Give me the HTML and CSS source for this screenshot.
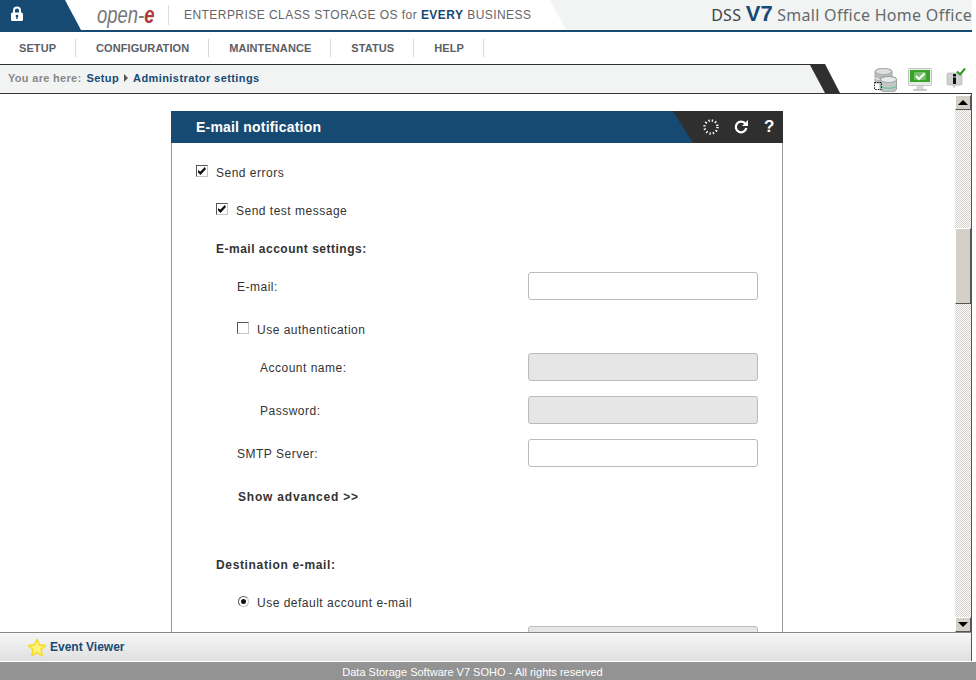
FILE: index.html
```html
<!DOCTYPE html>
<html lang="en">
  <head>
    <meta charset="UTF-8" />
    <title>DSS V7 - E-mail notification</title>
    <link rel="stylesheet" href="styles.css">
  </head>
  <body>
    <div class="app">
      <header class="top">
        <div class="lock">
          <svg width="14" height="15" viewBox="0 0 14 15"><path d="M3 7V4.500a4 4 0 0 1 8 0V7h-2V4.500a2 2 0 0 0-4 0V7z" fill="#fff"/><rect x="1" y="6.500" width="12" height="8.500" rx="1.500" fill="#fff"/><circle cx="7" cy="10" r="1.300" fill="#174a73"/><rect x="6.300" y="10" width="1.400" height="3" fill="#174a73"/></svg>
        </div>
        <div class="brand">
          <span class="logo">open-<b>e</b></span>
          <span class="tagline">ENTERPRISE CLASS STORAGE OS for <b>EVERY</b> BUSINESS</span>
        </div>
        <div class="product"><span class="dss">DSS</span> <b>V7</b> Small Office Home Office</div>
      </header>

      <nav class="nav">
        <a>SETUP</a>
        <a>CONFIGURATION</a>
        <a>MAINTENANCE</a>
        <a>STATUS</a>
        <a>HELP</a>
      </nav>

      <div class="crumbs">
        <div class="crumb-edge">
          <div class="crumb-bar">
            <span class="here">You are here:</span>
            <a>Setup</a>
            <i class="arrow"></i>
            <a>Administrator settings</a>
          </div>
        </div>
        <div class="status-icons">
          <svg width="24" height="24" viewBox="0 0 24 24">
            <path d="M2 3.500C2 1.500 6 .5 10.500 .5S19 1.500 19 3.500V15H2z" fill="#b9bdbb" stroke="#8b8f8d" stroke-width=".7"/>
            <ellipse cx="10.500" cy="3.500" rx="8" ry="3" fill="#dfe1e0" stroke="#9a9e9c" stroke-width=".7"/>
            <path d="M2 9.500c2 3 15 3 17 0" fill="none" stroke="#f4f5f5" stroke-width="1.200"/>
            <path d="M7 11.500c0-2 3.500-3 8.500-3s8 1 8 3V21c0 2-3.500 3-8 3s-8.500-1-8.500-3z" fill="#c2c6c4" stroke="#7f8381" stroke-width=".7"/>
            <ellipse cx="15.500" cy="11.500" rx="8" ry="3" fill="#e8eae9" stroke="#8f9391" stroke-width=".7"/>
            <path d="M7 18c2 3 14.500 3 16.500 0" fill="none" stroke="#62c796" stroke-width="1.200"/>
            <rect x="1.500" y="14.500" width="7" height="7" fill="none" stroke="#111" stroke-dasharray="1.500 1.200"/>
          </svg>
          <svg class="ico-mon" width="24" height="24" viewBox="0 0 24 24">
            <rect x=".5" y=".5" width="23" height="17" rx="1" fill="#e9ebea" stroke="#c3c6c4"/>
            <rect x="2" y="2" width="20" height="12" fill="#3aa329"/>
            <rect x="6" y="4" width="12" height="8" rx="1" fill="#fff" opacity=".3"/>
            <path d="M8 8l3 3 5.500-5.500" fill="none" stroke="#fff" stroke-width="2.200"/>
            <path d="M9 18h6l1 3H8z" fill="#d3d6d4"/>
            <rect x="5" y="21" width="14" height="2" rx="1" fill="#c6c9c7"/>
          </svg>
          <svg class="ico-info" width="20" height="24" viewBox="0 0 20 24">
            <path d="M1 6.500A1.500 1.500 0 0 1 2.500 5h12A1.500 1.500 0 0 1 16 6.500v9a1.500 1.500 0 0 1-1.500 1.500H10l-2 2.500L6.500 17h-4A1.500 1.500 0 0 1 1 15.500z" fill="#cfd2d0" stroke="#a9acaa" stroke-width=".6"/>
            <rect x="7" y="6" width="3" height="2.500" fill="#111"/>
            <rect x="7" y="9.500" width="3" height="6.500" fill="#111"/>
            <path d="M11 3.500l3 3 5-6" fill="none" stroke="#2f9a1f" stroke-width="2"/>
          </svg>
        </div>
      </div>

      <div class="middle">
        <main class="scroller">
          <section class="panel">
            <div class="panel-head">
              <h2>E-mail notification</h2>
              <div class="panel-tools">
                <svg width="16" height="16" viewBox="0 0 16 16" fill="none">
                  <circle cx="8" cy="8" r="6.500" stroke="#fff" stroke-width="2.400" stroke-dasharray="1.300 2.100"/>
                </svg>
                <svg width="16" height="16" viewBox="0 0 16 16" fill="none">
                  <path d="M12.500 5A5.300 5.300 0 1 0 13.300 9" stroke="#fff" stroke-width="2.200"/>
                  <path d="M15 1v6H9z" fill="#fff"/>
                </svg>
                <span class="help">?</span>
              </div>
            </div>
            <div class="panel-body">
              <label class="row lvl1 check"><input type="checkbox" checked> Send errors</label>
              <label class="row lvl2 check"><input type="checkbox" checked> Send test message</label>
              <div class="row lvl2 subtitle">E-mail account settings:</div>
              <div class="row lvl3 field"><span>E-mail:</span><input type="text"></div>
              <label class="row lvl3 check"><input type="checkbox"> Use authentication</label>
              <div class="row lvl4 field"><span>Account name:</span><input type="text" disabled></div>
              <div class="row lvl4 field"><span>Password:</span><input type="text" disabled></div>
              <div class="row lvl3 field"><span>SMTP Server:</span><input type="text"></div>
              <div class="row lvl3 advanced"><a>Show advanced &gt;&gt;</a></div>
              <div class="row lvl2 subtitle">Destination e-mail:</div>
              <label class="row lvl3 check"><input type="radio" name="dest" checked> Use default account e-mail</label>
              <div class="row lvl3 field"><span></span><input type="text" disabled></div>
            </div>
          </section>
        </main>
        <div class="scrollbar">
          <div class="sb-btn"><i class="tri-up"></i></div>
          <div class="sb-track">
            <div class="sb-thumb"></div>
          </div>
          <div class="sb-btn"><i class="tri-down"></i></div>
        </div>
      </div>

      <div class="events">
        <svg width="20" height="19" viewBox="0 0 20 19"><path d="M10 1.500l2.500 5.400 5.900.7-4.400 4 1.200 5.900L10 14.600l-5.200 2.900L6 11.600l-4.400-4 5.900-.7z" fill="#fff27a" stroke="#f7dc2a" stroke-width="1.600" stroke-linejoin="round"/></svg>
        <a>Event Viewer</a>
      </div>
    </div>
    <footer class="copy">Data Storage Software V7 SOHO - All rights reserved</footer>
  </body>
</html>
```

FILE: styles.css
```css
* {
  box-sizing: border-box;
}

html,
body {
  height: 100%;
}

body {
  margin: 0;
  background: #fff;
  font-family: "Liberation Sans", Arial, sans-serif;
  font-size: 12px;
  color: #333;
  display: flex;
  flex-direction: column;
  overflow: hidden;
}

.app {
  width: 972px;
  height: 661px;
  display: flex;
  flex-direction: column;
}

/* header */
.top {
  height: 32px;
  display: flex;
  flex: none;
  border-bottom: 2px solid #174a73;
}

.lock {
  width: 81px;
  background: #174a73;
  clip-path: polygon(0 0, 65px 0, 100% 100%, 0 100%);
  padding: 6px 0 0 10px;
}

.brand {
  width: 485px;
  margin-right: -16px;
  display: flex;
  align-items: center;
}

.logo {
  width: 71px;
  flex: none;
  margin-left: 16px;
  font-style: italic;
  font-size: 24px;
  color: #777;
  line-height: 28px;
  white-space: nowrap;
  transform: scaleX(0.77);
  transform-origin: left center;
}

.logo b {
  color: #b23a3a;
}

.tagline {
  border-left: 1px solid #ddd;
  padding-left: 15px;
  line-height: 20px;
  font-size: 12px;
  letter-spacing: 0.450px;
  color: #666;
  white-space: nowrap;
}

.tagline b {
  color: #174a73;
  font-weight: bold;
}

.product {
  flex: 1;
  background: #f2f4f4;
  clip-path: polygon(0 0, 100% 0, 100% 100%, 16px 100%);
  text-align: right;
  font-family: "Noto Sans", sans-serif;
  font-size: 16px;
  letter-spacing: 0.300px;
  line-height: 27px;
  color: #656a6b;
  white-space: nowrap;
}

.product .dss {
  color: #3f4446;
}

.product b {
  font-family: "Liberation Sans", Arial, sans-serif;
  color: #174a73;
  font-size: 22px;
  letter-spacing: 0;
}

/* menu */
.nav {
  height: 32px;
  flex: none;
  display: flex;
  align-items: center;
}

.nav a {
  height: 18px;
  line-height: 18px;
  padding: 0 19px 0 20px;
  border-right: 1px solid #d8dada;
  font-size: 11px;
  font-weight: bold;
  letter-spacing: 0.080px;
  color: #5b6066;
}

.nav a:first-child {
  padding-left: 19px;
}

/* breadcrumb line */
.crumbs {
  height: 30px;
  flex: none;
  display: flex;
  border-bottom: 1px solid #333;
}

.crumb-edge {
  width: 840px;
  background: #2f2f2f;
  clip-path: polygon(0 0, 825px 0, 100% 100%, 0 100%);
}

.crumb-bar {
  height: 100%;
  padding: 0 0 1px 8px;
  background: #f2f4f4;
  clip-path: polygon(0 1px, 810px 1px, 825px 100%, 0 100%);
  display: flex;
  align-items: center;
  gap: 5px;
  font-size: 11px;
  font-weight: bold;
  letter-spacing: 0.420px;
}

.crumb-bar .here {
  color: #888;
  letter-spacing: 0.300px;
}

.crumb-bar a {
  color: #174a73;
}

.arrow {
  width: 0;
  height: 0;
  border-left: 4px solid #555;
  border-top: 4px solid transparent;
  border-bottom: 4px solid transparent;
}

.status-icons {
  flex: 1;
  display: flex;
  align-items: flex-end;
  padding: 0 0 1px 33px;
}

.ico-mon {
  margin-left: 11px;
}

.ico-info {
  margin-left: 14px;
}

/* middle area */
.middle {
  flex: 1;
  min-height: 0;
  display: flex;
}

.scroller {
  flex: 1;
  overflow: hidden;
  padding: 17px 0 0 171px;
}

.panel {
  width: 612px;
  border-left: 1px solid #999;
  border-right: 1px solid #999;
  min-height: 600px;
}

.panel-head {
  height: 32px;
  margin: 0 -1px;
  display: flex;
  justify-content: space-between;
  background: #174a73;
}

.panel-head h2 {
  margin: 0;
  padding-left: 25px;
  font-size: 14px;
  line-height: 32px;
  color: #fff;
  letter-spacing: 0.200px;
}

.panel-tools {
  width: 110px;
  background: #2f2f2f;
  clip-path: polygon(0 0, 100% 0, 100% 100%, 20px 100%);
  display: flex;
  align-items: center;
  padding-left: 30px;
  gap: 14px;
}

.help {
  margin-left: 1px;
  font-size: 17px;
  font-weight: bold;
  color: #fff;
}

.panel-body {
  padding: 15px 24px 0 0;
}

.row {
  height: 28px;
  margin-bottom: 10px;
  display: flex;
  align-items: center;
  letter-spacing: 0.500px;
}

.lvl1 {
  padding-left: 24px;
}

.lvl2 {
  padding-left: 44px;
}

.lvl3 {
  padding-left: 65px;
}

.lvl4 {
  padding-left: 88px;
}

.check,
.subtitle,
.advanced {
  padding-top: 2px;
}

.check input {
  appearance: none;
  width: 12px;
  height: 12px;
  margin: 0 8px 4px 0;
  background: #fff;
  border: 1px solid #c4c4c4;
  border-top-color: #555;
  border-left-color: #555;
  position: relative;
}

.check input:checked::after {
  content: "";
  position: absolute;
  left: 1px;
  top: 1px;
  width: 8px;
  height: 8px;
  background: #111;
  clip-path: polygon(0 40%, 30% 55%, 85% 0, 100% 25%, 32% 100%, 0 70%);
}

.check input[type="radio"] {
  width: 11px;
  height: 11px;
  margin-left: 1px;
  border-radius: 50%;
}

.check input[type="radio"]:checked::after {
  left: 2px;
  top: 2px;
  width: 5px;
  height: 5px;
  border-radius: 50%;
  clip-path: none;
}

.subtitle {
  font-weight: bold;
}

.subtitle:nth-child(10) {
  letter-spacing: 0.650px;
}

.field {
  margin-bottom: 15px;
}

.field span {
  flex: 1;
  padding-top: 2px;
}

.field input {
  width: 230px;
  height: 28px;
  padding: 0 6px;
  border: 1px solid #bbb;
  border-radius: 3px;
  background: #fff;
}

.field input:disabled {
  background: #e6e6e6;
}

.advanced {
  margin: 0 0 40px 1px;
  font-weight: bold;
  letter-spacing: 0.800px;
}

/* fake classic scrollbar */
.scrollbar {
  width: 17px;
  display: flex;
  flex-direction: column;
  padding-top: 1px;
  border-right: 1px solid #555;
}

.sb-btn {
  height: 15px;
  flex: none;
  display: flex;
  align-items: center;
  justify-content: center;
  background: #d4d0c8;
  border: 1px solid #fff;
  border-right-color: #555;
  border-bottom-color: #555;
}

.tri-up {
  border: 5px solid transparent;
  border-top: 0;
  border-bottom: 5px solid #000;
}

.tri-down {
  border: 5px solid transparent;
  border-bottom: 0;
  border-top: 5px solid #000;
}

.sb-track {
  flex: 1;
  padding-top: 118px;
  background: repeating-conic-gradient(#d4d0c8 0 25%, #fff 0 50%) 0 0 / 2px 2px;
}

.sb-thumb {
  height: 76px;
  background: #d4d0c8;
  border: 1px solid #fff;
  border-right-color: #555;
  border-bottom-color: #555;
}

/* bottom */
.events {
  height: 29px;
  flex: none;
  display: flex;
  align-items: center;
  gap: 3px;
  padding-left: 27px;
  border-top: 1px solid #888;
  border-right: 1px solid #555;
  background: linear-gradient(#f6f6f6, #e0e0e0);
  font-weight: bold;
  color: #174a73;
}

.copy {
  flex: 1;
  margin-top: 1px;
  padding-right: 31px;
  background: #939393;
  color: #fff;
  font-size: 11px;
  line-height: 20px;
  text-align: center;
}
```
